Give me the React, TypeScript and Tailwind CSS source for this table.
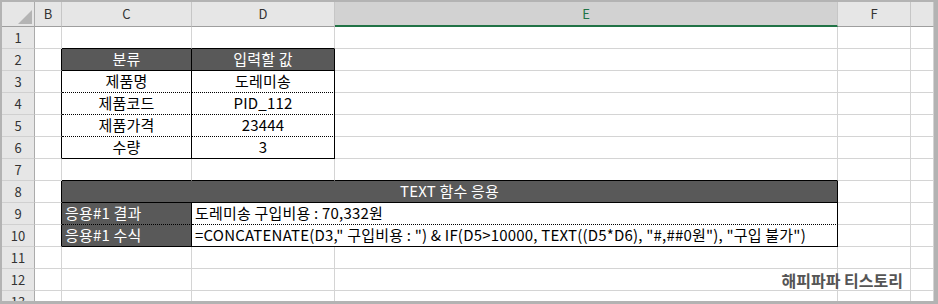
import React from 'react'

type Cell = {
  t?: string
  cls?: string
  span?: 2 | 3
  dark?: boolean
  left?: boolean
}

const FONT = "font-['Noto_Sans_CJK_KR',sans-serif]"
const BASE =
  'border-r border-b border-[#d4d4d4] flex items-center overflow-hidden whitespace-nowrap text-[15px] tracking-[0.2px] text-black'

const BR = 'border-r-black'
const BB = 'border-b-black'
const BD = 'border-b-black [border-bottom-style:dotted]!'

const cols = ['B', 'C', 'D', 'E', 'F', '']

// rows 1..13, each with cells for columns B..G (merged cells take fewer entries)
const rows: Cell[][] = [
  [{}, { cls: BB }, { cls: BB }, {}, {}, {}],
  [
    { cls: BR },
    { t: '분류', dark: true, cls: `${BR} ${BB}` },
    { t: '입력할 값', dark: true, cls: `${BR} ${BB}` },
    {}, {}, {},
  ],
  [{ cls: BR }, { t: '제품명', cls: `${BR} ${BD}` }, { t: '도레미송', cls: `${BR} ${BD}` }, {}, {}, {}],
  [{ cls: BR }, { t: '제품코드', cls: `${BR} ${BD}` }, { t: 'PID_112', cls: `${BR} ${BD}` }, {}, {}, {}],
  [{ cls: BR }, { t: '제품가격', cls: `${BR} ${BD}` }, { t: '23444', cls: `${BR} ${BD}` }, {}, {}, {}],
  [{ cls: BR }, { t: '수량', cls: `${BR} ${BB}` }, { t: '3', cls: `${BR} ${BB}` }, {}, {}, {}],
  [{}, { cls: BB }, { cls: BB }, { cls: BB }, {}, {}],
  [{ cls: BR }, { t: 'TEXT 함수 응용', dark: true, span: 3, cls: `${BR} ${BB}` }, {}, {}],
  [
    { cls: BR },
    { t: '응용#1 결과', dark: true, left: true, cls: `${BR} ${BD}` },
    { t: '도레미송 구입비용 : 70,332원', left: true, span: 2, cls: `${BR} ${BD}` },
    {}, {},
  ],
  [
    { cls: BR },
    { t: '응용#1 수식', dark: true, left: true, cls: `${BR} ${BB}` },
    {
      t: '=CONCATENATE(D3," 구입비용 : ") & IF(D5>10000, TEXT((D5*D6), "#,##0원"), "구입 불가")',
      left: true,
      span: 2,
      cls: `${BR} ${BB}`,
    },
    {}, {},
  ],
  [{}, {}, {}, {}, {}, {}],
  [{}, {}, {}, {}, {}, {}],
  [{}, {}, {}, {}, {}, {}],
]

const spanCls = { 2: 'col-span-2', 3: 'col-span-3' }

export default function App() {
  return (
    <div className={`w-[938px] h-[304px] bg-[#b3b3b3] pt-[2px] pl-[2px] pr-[4px] pb-[3px] ${FONT}`}>
      <div className="relative h-[299px] bg-white overflow-hidden grid grid-cols-[33px_27px_130px_143px_503px_73px_1fr] grid-rows-[25px_repeat(13,22px)]">
        {/* corner */}
        <div className="bg-[#e6e6e6] border-r border-b border-r-[#ababab] border-b-[#9e9e9e] flex items-end justify-end pr-[2px] pb-[2px]">
          <svg width="14" height="14" viewBox="0 0 14 14">
            <polygon points="14,0 14,14 0,14" fill="#b4b4b4" />
          </svg>
        </div>
        {cols.map((c) =>
          c === 'E' ? (
            <div
              key={c}
              className="bg-[#d2d2d2] border-r border-b-2 border-r-[#c6c6c6] border-b-[#217346] flex items-center justify-center text-[13px] text-[#217346]"
            >
              {c}
            </div>
          ) : (
            <div
              key={c || 'G'}
              className="bg-[#e6e6e6] border-r border-b border-r-[#c6c6c6] border-b-[#9e9e9e] flex items-center justify-center text-[13px] text-[#333]"
            >
              {c}
            </div>
          )
        )}

        {rows.map((row, ri) => (
          <React.Fragment key={ri}>
            <div className="bg-[#e6e6e6] border-r border-b border-r-[#ababab] border-b-[#d0d0d0] flex items-center justify-center text-[13px] text-[#333]">
              {ri + 1}
            </div>
            {row.map((cell, ci) => (
              <div
                key={ci}
                className={`${BASE} ${cell.span ? spanCls[cell.span] : ''} ${
                  cell.dark ? 'bg-[#595959] text-white' : ''
                } ${cell.left ? 'justify-start pl-[3px]' : 'justify-center'} ${cell.cls ?? ''}`}
              >
                {cell.t}
              </div>
            ))}
          </React.Fragment>
        ))}

        {/* blog watermark */}
        <div className="absolute right-[31px] top-[267px] h-[22px] flex items-center text-[16px] font-bold text-[#555] whitespace-nowrap">
          해피파파 티스토리
        </div>
      </div>
    </div>
  )
}
